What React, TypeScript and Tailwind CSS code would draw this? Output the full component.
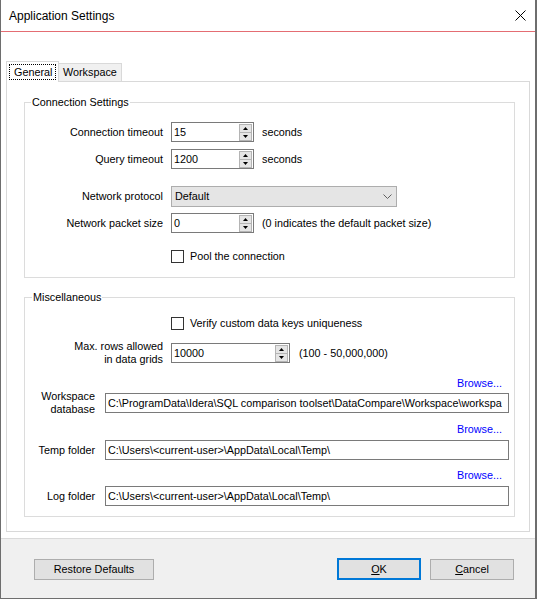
import React from "react";

function Spinner() {
  return (
    <div className="flex flex-col w-[13px] mr-px shrink-0">
      <div className="h-[9px] border border-[#b4b4b4] bg-[#e5e5e5] flex items-center justify-center">
        <svg width="5" height="3" viewBox="0 0 5 3">
          <polygon points="0,3 2.5,0 5,3" fill="#000" />
        </svg>
      </div>
      <div className="h-[9px] -mt-px border border-[#b4b4b4] bg-[#e5e5e5] flex items-center justify-center">
        <svg width="5" height="3" viewBox="0 0 5 3">
          <polygon points="0,0 5,0 2.5,3" fill="#000" />
        </svg>
      </div>
    </div>
  );
}

function SpinInput({ value, width }: { value: string; width: string }) {
  return (
    <div className={`${width} h-[20px] border border-[#7a7a7a] bg-white flex items-center shrink-0`}>
      <span className="flex-1 pl-[2px] leading-[13px]">{value}</span>
      <Spinner />
    </div>
  );
}

function Checkbox({ label }: { label: string }) {
  return (
    <div className="flex items-center h-[13px] ml-[146px]">
      <div className="w-[13px] h-[13px] border border-[#333333] bg-white shrink-0" />
      <span className="ml-[6px] leading-[13px]">{label}</span>
    </div>
  );
}

function TextBox({ value }: { value: string }) {
  return (
    <div className="ml-[10px] w-[404px] h-[20px] border border-[#7a7a7a] bg-white flex items-center overflow-hidden">
      <span className="pl-[2px] whitespace-nowrap leading-[13px]">{value}</span>
    </div>
  );
}

function Browse({ mt }: { mt: string }) {
  return (
    <div className={`${mt} flex justify-end pr-[12px]`}>
      <span className="text-[#0000ff] leading-[13px]">Browse...</span>
    </div>
  );
}

export default function App() {
  return (
    <div className="w-[537px] h-[599px] flex flex-col bg-white border-l border-r-2 border-b border-[#6e6e6e] overflow-hidden font-['Liberation_Sans',Arial,sans-serif] text-[10.8px] text-black">
      {/* Title bar */}
      <div className="h-[31px] flex items-center justify-between pl-[8px] pr-[9px] shrink-0">
        <span className="text-[12px] leading-[16px]">Application Settings</span>
        <svg width="11" height="11" viewBox="0 0 11 11">
          <path d="M0.5 0.5 L10.5 10.5 M10.5 0.5 L0.5 10.5" stroke="#000" strokeWidth="1" />
        </svg>
      </div>
      <div className="h-px bg-[#e46d73] shrink-0" />

      {/* Body */}
      <div className="h-[506px] shrink-0 bg-white pt-[29px] pl-[5px] pr-[5px]">
        {/* Tabs */}
        <div className="flex items-start h-[21px] -mb-px relative z-10">
          <div className="w-[53px] h-[21px] border border-b-0 border-[#d9d9d9] bg-white p-[2px]">
            <div className="h-[16px] border border-dotted border-black flex items-center pl-[4px] leading-[13px]">
              General
            </div>
          </div>
          <div className="mt-[2px] w-[63px] h-[18px] border border-l-0 border-b-0 border-[#d9d9d9] bg-[#f0f0f0] flex items-center pl-[4px] leading-[13px]">
            Workspace
          </div>
        </div>

        {/* Panel */}
        <div className="h-[451px] border border-[#d9d9d9] bg-white pt-[20px] pl-[17px] pr-[14px]">
          {/* Connection Settings */}
          <div className="relative h-[176px] border border-[#dcdcdc] pt-[19px]">
            <span className="absolute left-[6px] -top-[7px] bg-white px-px leading-[13px]">Connection Settings</span>

            <div className="flex items-center h-[20px]">
              <span className="w-[138px] text-right mr-[8px] leading-[13px]">Connection timeout</span>
              <SpinInput value="15" width="w-[83px]" />
              <span className="ml-[8px] leading-[13px]">seconds</span>
            </div>
            <div className="flex items-center h-[20px] mt-[7px]">
              <span className="w-[138px] text-right mr-[8px] leading-[13px]">Query timeout</span>
              <SpinInput value="1200" width="w-[83px]" />
              <span className="ml-[8px] leading-[13px]">seconds</span>
            </div>
            <div className="flex items-center h-[21px] mt-[17px]">
              <span className="w-[138px] text-right mr-[8px] leading-[13px]">Network protocol</span>
              <div className="w-[226px] h-[21px] bg-[#e5e5e5] border border-[#adadad] flex items-center justify-between pl-[3px] pr-[4px]">
                <span className="leading-[13px]">Default</span>
                <svg width="9" height="5" viewBox="0 0 9 5">
                  <polyline points="0.5,0.5 4.5,4.5 8.5,0.5" fill="none" stroke="#606060" strokeWidth="1" />
                </svg>
              </div>
            </div>
            <div className="flex items-center h-[20px] mt-[6px]">
              <span className="w-[138px] text-right mr-[8px] leading-[13px]">Network packet size</span>
              <SpinInput value="0" width="w-[83px]" />
              <span className="ml-[8px] leading-[13px]">(0 indicates the default packet size)</span>
            </div>
            <div className="mt-[17px]">
              <Checkbox label="Pool the connection" />
            </div>
          </div>

          {/* Miscellaneous */}
          <div className="relative mt-[19px] h-[220px] border border-[#dcdcdc] pt-[19px]">
            <span className="absolute left-[7px] -top-[7px] bg-white px-px leading-[13px]">Miscellaneous</span>

            <Checkbox label="Verify custom data keys uniqueness" />

            <div className="flex items-center h-[20px] mt-[13px]">
              <span className="w-[138px] text-right mr-[8px] leading-[13px]">
                Max. rows allowed
                <br />
                in data grids
              </span>
              <SpinInput value="10000" width="w-[119px]" />
              <span className="ml-[9px] leading-[13px]">(100 - 50,000,000)</span>
            </div>

            <Browse mt="mt-[14px]" />
            <div className="flex items-center h-[20px] mt-[3px]">
              <span className="w-[70px] text-right leading-[13px]">
                Workspace
                <br />
                database
              </span>
              <TextBox value="C:\ProgramData\Idera\SQL comparison toolset\DataCompare\Workspace\workspa" />
            </div>

            <Browse mt="mt-[10px]" />
            <div className="flex items-center h-[20px] mt-[4px]">
              <span className="w-[70px] text-right leading-[13px]">Temp folder</span>
              <TextBox value="C:\Users\<current-user>\AppData\Local\Temp\" />
            </div>

            <Browse mt="mt-[9px]" />
            <div className="flex items-center h-[20px] mt-[4px]">
              <span className="w-[70px] text-right leading-[13px]">Log folder</span>
              <TextBox value="C:\Users\<current-user>\AppData\Local\Temp\" />
            </div>
          </div>
        </div>
      </div>

      {/* Footer */}
      <div className="flex-1 bg-[#f0f0f0] border-t border-[#dadada] flex items-start pt-[20px] pl-[33px] pr-[21px]">
        <div className="w-[120px] h-[21px] bg-[#e1e1e1] border border-[#adadad] flex items-center justify-center leading-[13px]">
          Restore Defaults
        </div>
        <div className="ml-auto w-[84px] h-[22px] -mt-px bg-[#e1e1e1] border-2 border-[#0078d7] flex items-center justify-center leading-[13px]">
          <span>
            <u>O</u>K
          </span>
        </div>
        <div className="ml-[9px] w-[84px] h-[21px] bg-[#e1e1e1] border border-[#adadad] flex items-center justify-center leading-[13px]">
          <span>
            <u>C</u>ancel
          </span>
        </div>
      </div>
    </div>
  );
}
